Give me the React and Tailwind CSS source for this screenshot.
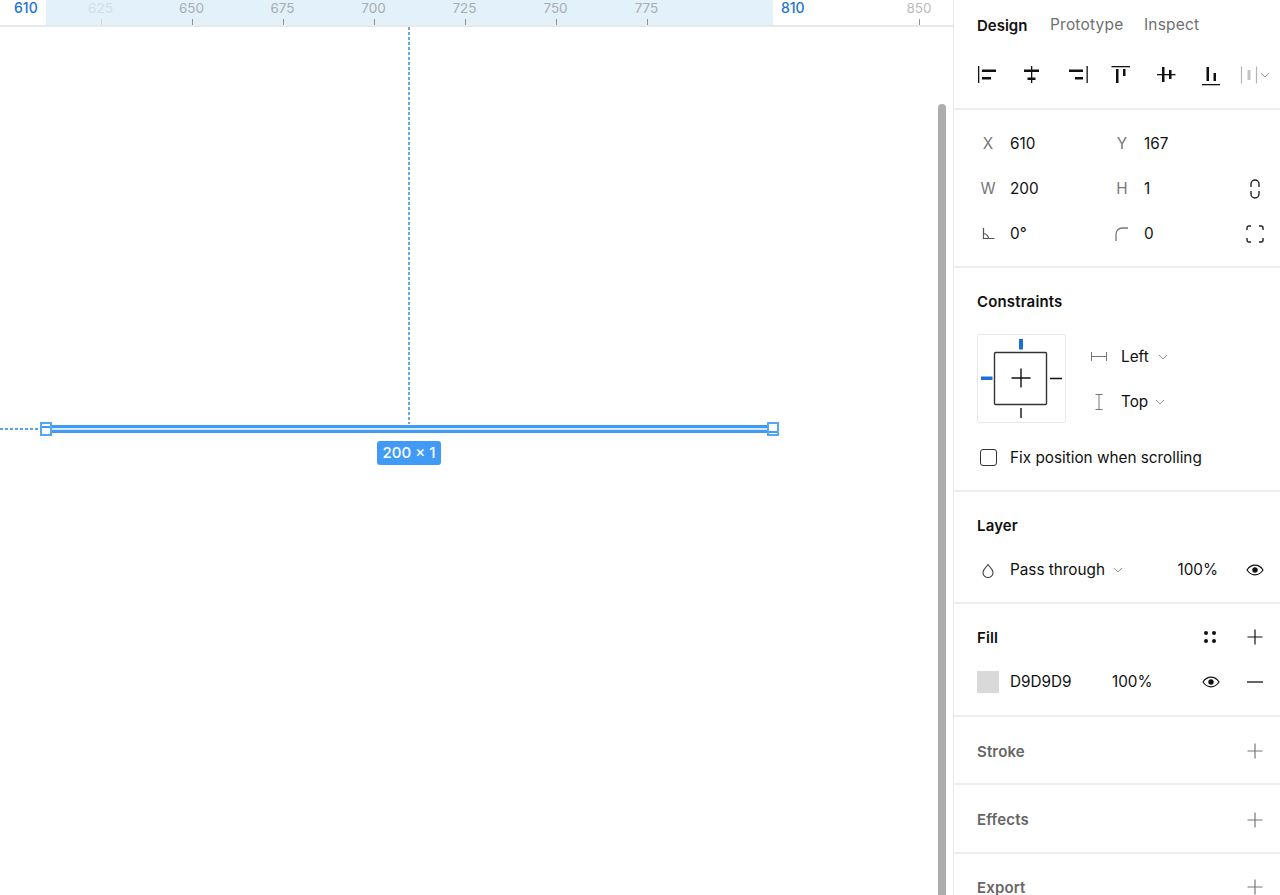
import React from 'react';

const ticks = [
  { x: 100.5, label: '625', faded: true },
  { x: 191.5, label: '650' },
  { x: 282.5, label: '675' },
  { x: 373.5, label: '700' },
  { x: 464.5, label: '725' },
  { x: 555.5, label: '750' },
  { x: 646.5, label: '775' },
  { x: 919, label: '850', light: true },
];

const Icon = ({ children, w = 24, h = 24, className = '' }) => (
  <svg width={w} height={h} viewBox={`0 0 ${w} ${h}`} fill="none" className={`shrink-0 ${className}`}>
    {children}
  </svg>
);

const Bar = ({ x, y, w, h, fill = '#111' }) => <rect x={x} y={y} width={w} height={h} fill={fill} />;

const alignIcons = [
  [[3, 3, 1.3, 17], [7, 6.5, 14, 2.5], [7, 14, 9, 2.5]],
  [[11, 3, 1.3, 17], [4, 6.5, 15, 2.5], [7.5, 14.5, 8, 2.5]],
  [[21.5, 3, 1.3, 17], [4, 6.5, 14, 2.5], [10, 14, 8, 2.5]],
  [[2.5, 3, 18.5, 1.3], [7, 6, 2.5, 14], [14, 6, 2.5, 7]],
  [[3, 11, 18.5, 1.3], [8, 4, 2.5, 15], [15, 7, 2.5, 9]],
  [[3, 21, 18, 1.3], [7.5, 4, 2.5, 14], [14.5, 10, 2.5, 8]],
];

const Chevron = ({ className = '' }) => (
  <Icon w={10} h={6} className={className}>
    <path d="M1 1l4 4 4-4" stroke="#999" strokeWidth="1" />
  </Icon>
);

const Eye = () => (
  <Icon w={18} h={12}>
    <path d="M1 6c2-3 5-4.8 8-4.8S15 3 17 6c-2 3-5 4.8-8 4.8S3 9 1 6z" stroke="#111" strokeWidth="1.2" />
    <circle cx="9" cy="6" r="2.7" fill="#111" />
  </Icon>
);

const Plus = ({ color = '#111' }) => (
  <Icon w={16} h={16}>
    <path d="M8 .5v15M.5 8h15" stroke={color} strokeWidth="1.2" />
  </Icon>
);

const Section = ({ children, className = '' }) => (
  <section className={`shrink-0 border-b-2 border-[#eeeeee] px-[23px] ${className}`}>{children}</section>
);

const Title = ({ children, gray }) => (
  <h2 className={`text-[15px] font-semibold leading-none tracking-[0.15px] ${gray ? 'text-[#666666]' : 'text-[#111111]'}`}>{children}</h2>
);

const Field = ({ label, value }) => (
  <div className="flex items-center">
    <span className="mr-[11px] w-[22px] text-center text-[#777777]">{label}</span>
    <span>{value}</span>
  </div>
);

function Ruler() {
  return (
    <div className="relative h-[27px] border-b-2 border-[#e9e9e9] text-[13.5px] leading-none">
      <div className="absolute left-[46px] top-0 h-[25px] w-[727px] bg-[#e3f1fb]" />
      <span className="absolute left-[14px] top-[1px] text-[14px] font-medium text-[#1b74d0]">610</span>
      <span className="absolute left-[781px] top-[1px] text-[14px] font-medium text-[#1b74d0]">810</span>
      {ticks.map((t) => (
        <div key={t.label} className="absolute top-0 h-[25px] w-0" style={{ left: t.x }}>
          <span
            className={`absolute left-[-15px] top-[2px] w-[30px] text-center ${
              t.faded ? 'text-[#d3dee5]' : t.light ? 'text-[#bbbbbb]' : 'text-[#a8adb0]'
            }`}
          >
            {t.label}
          </span>
          <span className={`absolute left-0 top-[19px] h-[6px] w-px ${t.faded ? 'bg-[#ced8de]' : 'bg-[#8f9395]'}`} />
        </div>
      ))}
    </div>
  );
}

function Canvas() {
  return (
    <main className="relative h-full w-[953px] shrink-0 overflow-hidden bg-white">
      <Ruler />
      {/* guides */}
      <svg width="2" height="397" className="absolute left-[408px] top-[27px]">
        <path d="M1 0v397" stroke="#2484dc" strokeWidth="1.4" strokeDasharray="3 2" />
      </svg>
      <svg width="40" height="2" className="absolute left-0 top-[428px]">
        <path d="M0 1h40" stroke="#2484dc" strokeWidth="1.4" strokeDasharray="3 2" />
      </svg>
      {/* selected line */}
      <div className="absolute left-[46px] top-[425px] h-[8px] w-[727px] border-y-[3px] border-[#3f9bf6] bg-[#d5e8fa]" />
      <div className="absolute left-[40px] top-[422px] h-[14px] w-[12px] border-2 border-[#55a7f6] bg-white">
        <div className="mt-[2px] h-[2px] bg-[#3f9bf6]" />
      </div>
      <div className="absolute left-[767px] top-[422px] h-[14px] w-[12px] border-2 border-[#55a7f6] bg-white">
        <div className="mt-[7px] h-[2px] bg-[#3f9bf6]" />
      </div>
      <div className="absolute left-[377px] top-[441px] flex h-[24px] w-[64px] items-center justify-center rounded-[3px] bg-[#3f9bf6] text-[15px] font-medium text-white">
        200 × 1
      </div>
      {/* scrollbar */}
      <div className="absolute left-[938px] top-[104px] h-[800px] w-[8px] rounded-t-[4px] bg-[#adadad]" />
    </main>
  );
}

function ConstraintBox() {
  return (
    <div className="h-[89px] w-[89px] rounded-[2px] border border-[#e8e8e8]">
      <svg width="87" height="87" viewBox="0 0 87 87" fill="none">
        <rect x="16.5" y="17.5" width="52" height="52" rx="1" stroke="#333" strokeWidth="1.4" />
        <path d="M43 33.500v19M33.500 43h19" stroke="#111" strokeWidth="1.4" />
        <rect x="41" y="4" width="4" height="10.5" fill="#1c6fd6" />
        <rect x="3" y="41.5" width="11.5" height="3.5" fill="#1c6fd6" />
        <path d="M72 43.500h12M43 73v10" stroke="#111" strokeWidth="1.4" />
      </svg>
    </div>
  );
}

function Panel() {
  return (
    <aside className="flex h-full flex-1 flex-col overflow-hidden border-l border-[#e8e8e8] bg-white font-['Inter',sans-serif] text-[15.3px] leading-none text-[#111111]">
      <div className="shrink-0 border-b-2 border-[#eeeeee] pb-[8px]">
        <nav className="flex h-[50px] items-center pl-[23px] text-[15.5px]">
          <span className="w-[73px] text-[15px] font-semibold">Design</span>
          <span className="w-[94px] tracking-[0.2px] text-[#6f6f6f]">Prototype</span>
          <span className="tracking-[0.2px] text-[#6f6f6f]">Inspect</span>
        </nav>
        <div className="flex h-[50px] items-center pl-[11px]">
          {alignIcons.map((bars, i) => (
            <div key={i} className="flex w-[44.7px] justify-center">
              <Icon>
                {bars.map(([x, y, w, h], j) => (
                  <Bar key={j} x={x} y={y} w={w} h={h} />
                ))}
              </Icon>
            </div>
          ))}
          <div className="ml-[7px] flex items-center gap-[2px]">
            <Icon w={18} h={20}>
              <path d="M1.500 1.500v17M16.500 1.500v17" stroke="#b5b5b5" strokeWidth="1.2" />
              <rect x="7.5" y="5" width="3" height="10" fill="#c4c4c4" />
            </Icon>
            <Chevron />
          </div>
        </div>
      </div>

      <Section className="pb-[10px] pt-[11px]">
        <div className="flex h-[45px] items-center">
          <div className="flex w-[134px] items-center"><Field label="X" value="610" /></div>
          <Field label="Y" value="167" />
        </div>
        <div className="flex h-[45px] items-center">
          <div className="flex w-[134px] items-center"><Field label="W" value="200" /></div>
          <Field label="H" value="1" />
          <Icon w={12} h={20} className="ml-auto mr-[-4px]">
            <path d="M2 8V5a4 4 0 018 0v3M2 12v3a4 4 0 008 0v-3" stroke="#222" strokeWidth="1.4" />
          </Icon>
        </div>
        <div className="flex h-[45px] items-center">
          <div className="flex w-[134px] items-center">
            <div className="mr-[11px] flex w-[22px] justify-center">
              <Icon w={13} h={13}>
                <path d="M1.500 1v10.500h11M1.500 6.500c2.500 0 5 2.500 5 5" stroke="#555" strokeWidth="1.2" />
              </Icon>
            </div>
            <span>0°</span>
          </div>
          <div className="mr-[11px] flex w-[22px] justify-center">
            <Icon w={14} h={14}>
              <path d="M1 14V7a6 6 0 016-6h6" stroke="#777" strokeWidth="1.3" />
            </Icon>
          </div>
          <span>0</span>
          <Icon w={18} h={18} className="ml-auto mr-[-7px]">
            <path d="M1 5V3a2 2 0 012-2h2M13 1h2a2 2 0 012 2v2M17 13v2a2 2 0 01-2 2h-2M5 17H3a2 2 0 01-2-2v-2" stroke="#222" strokeWidth="1.4" />
          </Icon>
        </div>
      </Section>

      <Section className="h-[224px] pt-[26px]">
        <Title>Constraints</Title>
        <div className="mt-[25px] flex">
          <ConstraintBox />
          <div className="ml-[25px] flex flex-col">
            <div className="flex h-[45px] items-center">
              <Icon w={16} h={9} className="mr-[14px]">
                <path d="M.5 0v9M15.500 0v9M.5 4.500h15" stroke="#777" />
              </Icon>
              <span>Left</span>
              <Chevron className="ml-[9px]" />
            </div>
            <div className="flex h-[45px] items-center">
              <Icon w={16} h={16} className="mr-[14px]">
                <path d="M4.500.5h7M4.500 15.500h7M8 .5v15" stroke="#777" />
              </Icon>
              <span>Top</span>
              <Chevron className="ml-[7px]" />
            </div>
          </div>
        </div>
        <div className="ml-[3px] mt-[25px] flex items-center">
          <div className="h-[17px] w-[17px] rounded-[3px] border-[1.5px] border-[#333333]" />
          <span className="ml-[13px]">Fix position when scrolling</span>
        </div>
      </Section>

      <Section className="h-[112px] pt-[26px]">
        <Title>Layer</Title>
        <div className="mt-[25px] flex h-[24px] items-center">
          <div className="mr-[11px] flex w-[22px] justify-center">
            <Icon w={12} h={15}>
              <path d="M6 1.500C4 4.500 1 6.500 1 9.500a5 5 0 0010 0c0-3-3-5-5-8z" stroke="#444" strokeWidth="1.1" />
            </Icon>
          </div>
          <span>Pass through</span>
          <Chevron className="ml-[8px]" />
          <span className="ml-auto mr-[28px]">100%</span>
          <div className="mr-[-7px]"><Eye /></div>
        </div>
      </Section>

      <Section className="h-[113px] pt-[25px]">
        <div className="flex h-[16px] items-center justify-between">
          <Title>Fill</Title>
          <div className="mr-[-6px] flex items-center gap-[30px]">
            <Icon w={14} h={14}>
              <circle cx="3" cy="3" r="2" fill="#111" />
              <circle cx="11" cy="3" r="2" fill="#111" />
              <circle cx="3" cy="11" r="2" fill="#111" />
              <circle cx="11" cy="11" r="2" fill="#111" />
            </Icon>
            <Plus />
          </div>
        </div>
        <div className="mt-[25px] flex h-[24px] items-center">
          <div className="mr-[11px] h-[22px] w-[22px] bg-[#d9d9d9]" />
          <span className="w-[102px]">D9D9D9</span>
          <span>100%</span>
          <div className="ml-auto mr-[-6px] flex items-center gap-[27px]">
            <Eye />
            <Icon w={16} h={2}><path d="M0 1h16" stroke="#111" strokeWidth="1.3" /></Icon>
          </div>
        </div>
      </Section>

      {[['Stroke', 'h-[68px]'], ['Effects', 'h-[69px]']].map(([name, h]) => (
        <Section key={name} className={`flex items-center justify-between pt-[2px] ${h}`}>
          <Title gray>{name}</Title>
          <div className="mr-[-6px]"><Plus color="#777" /></div>
        </Section>
      ))}
      <div className="flex h-[66px] shrink-0 items-center justify-between px-[23px]">
        <Title gray>Export</Title>
        <div className="mr-[-6px]"><Plus color="#777" /></div>
      </div>
    </aside>
  );
}

export default function App() {
  return (
    <div className="flex h-[895px] w-[1280px] overflow-hidden bg-white font-['Inter',sans-serif]">
      <Canvas />
      <Panel />
    </div>
  );
}
